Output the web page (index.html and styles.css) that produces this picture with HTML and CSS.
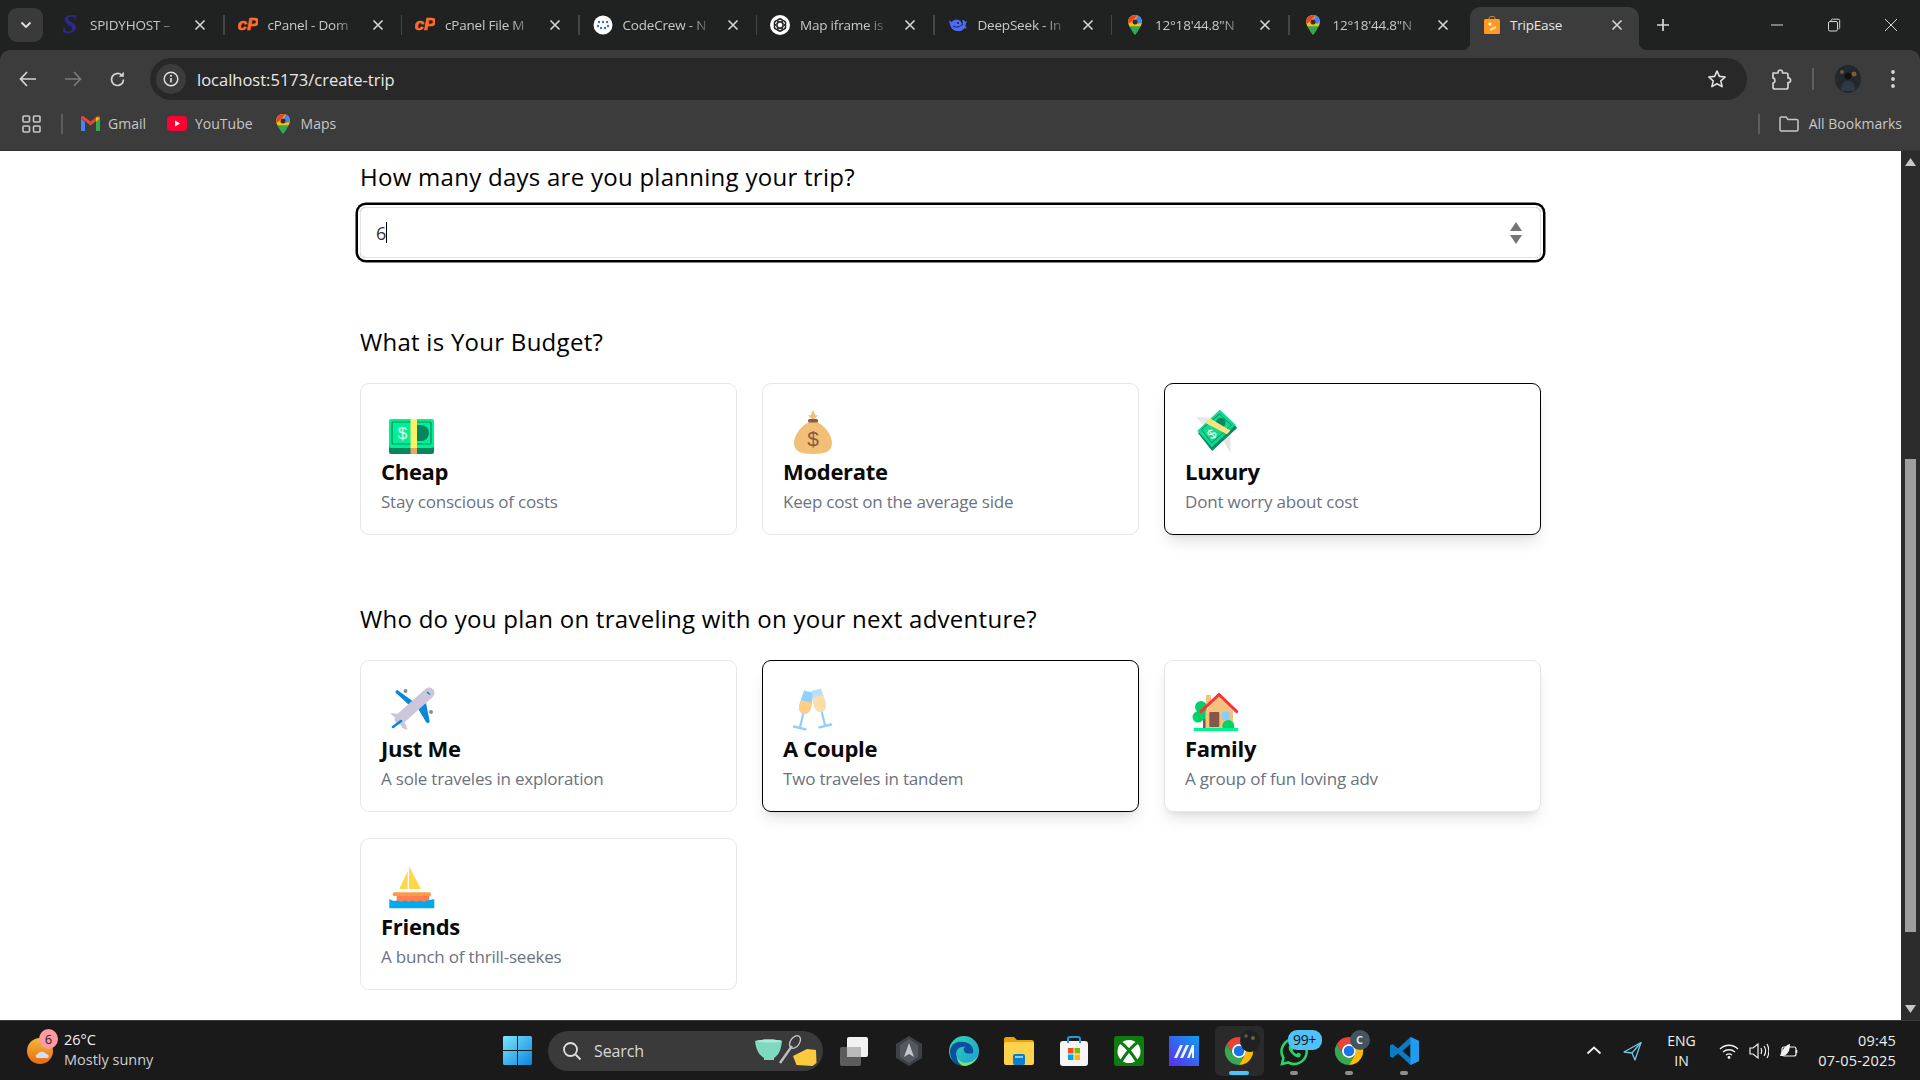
FILE: index.html
```html
<!DOCTYPE html>
<html>
<head>
<meta name="viewport" content="width=device-width, initial-scale=1">
<title>TripEase</title>
<link rel="stylesheet" href="styles.css">
</head>
<body>

<!-- shared icons -->
<svg class="defs" width="0" height="0">
  <defs>
    <symbol id="chrome" viewBox="0 0 32 32">
      <path fill="#ea4335" d="M16 1a15 15 0 0 1 13 7.5H16a7.5 7.5 0 0 0-6.5 11.25L3 8.5A15 15 0 0 1 16 1z"/>
      <path fill="#34a853" d="M3 8.5l6.5 11.25a7.5 7.5 0 0 0 13 0L16 31A15 15 0 0 1 3 8.5z"/>
      <path fill="#fbbc04" d="M29 8.5H16a7.5 7.5 0 0 1 6.5 11.25L16 31A15 15 0 0 0 29 8.5z"/>
      <circle cx="16" cy="16" r="7.5" fill="#fff"/>
      <circle cx="16" cy="16" r="5.6" fill="#1a73e8"/>
    </symbol>
    <clipPath id="pinclip">
      <path d="M12 0C5.5 0 1 5 1 11c0 7 11 21 11 21s11-14 11-21C23 5 18.5 0 12 0z"/>
    </clipPath>
    <symbol id="pin" viewBox="0 0 24 32">
      <g clip-path="url(#pinclip)">
        <rect width="24" height="32" fill="#34a853"/>
        <rect width="24" height="18" fill="#fbbc04"/>
        <path fill="#ea4335" d="M0 0h17L5 12 0 15z"/>
        <path fill="#4285f4" d="M17 0h7v12l-7 2-5-4z"/>
      </g>
      <circle cx="12" cy="11" r="4" fill="#3c2a1c"/>
    </symbol>
    <symbol id="closex" viewBox="0 0 12 12">
      <path d="M1.5 1.5l9 9M10.5 1.5l-9 9" stroke="#d6d6d6" stroke-width="1.6" fill="none"/>
    </symbol>
    <symbol id="cpanel" viewBox="0 0 22 16">
      <text x="11" y="14" text-anchor="middle" font-family="Liberation Sans" font-weight="700" font-style="italic" font-size="19" fill="#ff6c2c" stroke="#ff6c2c" stroke-width=".7">cP</text>
    </symbol>
  </defs>
</svg>

<div class="tabstrip">
  <div class="tabs-btn">
    <svg width="12" height="8" viewBox="0 0 12 8"><path d="M1.5 1.5L6 6l4.5-4.5" stroke="#e3e3e3" stroke-width="1.8" fill="none"/></svg>
  </div>

  <div class="tab">
    <svg class="favicon" viewBox="0 0 20 20"><text x="10" y="17.500" text-anchor="middle" font-family="Liberation Serif" font-weight="700" font-style="italic" font-size="27" fill="#2d2a8c">S</text></svg>
    <span class="tab-title">SPIDYHOST –</span>
    <svg class="tab-close"><use href="#closex"/></svg>
  </div>
  <div class="tab">
    <svg class="favicon"><use href="#cpanel"/></svg>
    <span class="tab-title">cPanel - Dom</span>
    <svg class="tab-close"><use href="#closex"/></svg>
  </div>
  <div class="tab">
    <svg class="favicon"><use href="#cpanel"/></svg>
    <span class="tab-title">cPanel File M</span>
    <svg class="tab-close"><use href="#closex"/></svg>
  </div>
  <div class="tab">
    <svg class="favicon" viewBox="0 0 20 20">
      <circle cx="10" cy="10" r="9.5" fill="#fff"/>
      <g fill="#3f6ec4"><circle cx="6" cy="7" r="1.2"/><circle cx="10" cy="7" r="1.2"/><circle cx="14" cy="7" r="1.2"/><circle cx="5" cy="11" r="1.2"/><circle cx="15" cy="11" r="1.2"/><circle cx="8" cy="13" r="1.2"/><circle cx="12" cy="13" r="1.2"/></g>
    </svg>
    <span class="tab-title">CodeCrew - N</span>
    <svg class="tab-close"><use href="#closex"/></svg>
  </div>
  <div class="tab">
    <svg class="favicon" viewBox="0 0 20 20">
      <circle cx="10" cy="10" r="10" fill="#fff"/>
      <g fill="none" stroke="#222" stroke-width="1.1"><circle cx="10" cy="10" r="5.8"/><ellipse cx="10" cy="10" rx="6.4" ry="2.8" transform="rotate(30 10 10)"/><ellipse cx="10" cy="10" rx="6.4" ry="2.8" transform="rotate(90 10 10)"/><ellipse cx="10" cy="10" rx="6.4" ry="2.8" transform="rotate(150 10 10)"/></g>
    </svg>
    <span class="tab-title">Map iframe is</span>
    <svg class="tab-close"><use href="#closex"/></svg>
  </div>
  <div class="tab">
    <svg class="favicon" viewBox="0 0 20 20">
      <path fill="#4d6bfe" d="M1 5c1 5 2 10 8 11 4 .6 6-1 7.500-3 1 .6 2 .6 2.500 0-1-.5-1.500-1.500-1.500-3 .3-2 1-3 2-4-1 0-1.500.4-2 1-1-1.500-2-2-3.500-2.200 1 1.500 1 3 .2 5C13.500 12 11 8 7 6.500 4.500 8 3 7 1 5z"/>
      <circle cx="8.500" cy="10" r="5.500" fill="#4d6bfe"/><circle cx="10" cy="8" r="1" fill="#202221"/><path d="M5 11c3 2 7 1 10-2" stroke="#202221" stroke-width="1" fill="none"/>
    </svg>
    <span class="tab-title">DeepSeek - In</span>
    <svg class="tab-close"><use href="#closex"/></svg>
  </div>
  <div class="tab">
    <svg class="favicon"><use href="#pin"/></svg>
    <span class="tab-title">12°18'44.8"N</span>
    <svg class="tab-close"><use href="#closex"/></svg>
  </div>
  <div class="tab no-sep">
    <svg class="favicon"><use href="#pin"/></svg>
    <span class="tab-title">12°18'44.8"N</span>
    <svg class="tab-close"><use href="#closex"/></svg>
  </div>
  <div class="tab active">
    <svg class="favicon" viewBox="0 0 20 20">
      <path d="M7 5V3c0-2 6-2 6 0v2" stroke="#e08a1c" stroke-width="1" fill="none"/>
      <rect x="2" y="4" width="16" height="15" rx="1.500" fill="#ff9a1f"/>
      <circle cx="8" cy="9" r="1.500" fill="#fff"/><path d="M8 15l6-3" stroke="#ffe1a8" stroke-width="2"/>
    </svg>
    <span class="tab-title">TripEase</span>
    <svg class="tab-close"><use href="#closex"/></svg>
  </div>

  <svg class="new-tab" width="14" height="14" viewBox="0 0 14 14"><path d="M7 1v12M1 7h12" stroke="#d6d6d6" stroke-width="1.700"/></svg>

  <div class="win-btns">
    <svg width="14" height="14" viewBox="0 0 14 14"><path d="M1 7h12" stroke="#d6d6d6" stroke-width="1"/></svg>
    <svg width="14" height="14" viewBox="0 0 14 14"><rect x="1.500" y="3.500" width="9" height="9.500" rx="1.500" fill="none" stroke="#d6d6d6"/><path d="M4 3.500V2.500c0-.8.500-1.300 1.300-1.300h6c.9 0 1.400.500 1.400 1.400v7c0 .8-.500 1.200-1.200 1.200" fill="none" stroke="#d6d6d6"/></svg>
    <svg width="14" height="14" viewBox="0 0 14 14"><path d="M1 1l12 12M13 1L1 13" stroke="#d6d6d6" stroke-width="1"/></svg>
  </div>
</div>

<div class="toolbar">
  <div class="nav-btn">
    <svg width="18" height="16" viewBox="0 0 18 16"><path d="M8 1L1.500 8 8 15M2 8h15" stroke="#d4d4d4" stroke-width="1.700" fill="none"/></svg>
  </div>
  <div class="nav-btn">
    <svg width="18" height="16" viewBox="0 0 18 16"><path d="M10 1l6.500 7L10 15M16 8H1" stroke="#7a7a7a" stroke-width="1.700" fill="none"/></svg>
  </div>
  <div class="nav-btn">
    <svg width="17" height="17" viewBox="0 0 17 17"><path d="M14.500 8.500a6 6 0 1 1-1.800-4.300" stroke="#d4d4d4" stroke-width="1.700" fill="none"/><path d="M14.800 0.800v5h-5z" fill="#d4d4d4"/></svg>
  </div>
  <div class="address">
    <div class="site-chip">
      <svg width="16" height="16" viewBox="0 0 16 16"><circle cx="8" cy="8" r="6.800" fill="none" stroke="#e3e3e3" stroke-width="1.400"/><path d="M8 7v4.500" stroke="#e3e3e3" stroke-width="1.600"/><circle cx="8" cy="4.800" r="1" fill="#e3e3e3"/></svg>
    </div>
    <span class="url">localhost:5173/create-trip</span>
    <svg class="star" width="20" height="20" viewBox="0 0 20 20"><path d="M10 2l2.400 5.400 5.800.6-4.400 3.900 1.300 5.700L10 14.700l-5.100 2.900 1.300-5.700L1.800 8l5.800-.6z" fill="none" stroke="#e3e3e3" stroke-width="1.600" stroke-linejoin="round"/></svg>
  </div>
  <svg class="puzzle" width="22" height="24" viewBox="0 0 22 24"><path d="M3 6h5c-.5-4 5-4 4.500 0H16c1 0 2 1 2 2v3c3.500-.5 3.500 5 0 4.500V20c0 1-1 2-2 2H5c-1 0-2-1-2-2v-4c2.500 0 2.500-5 0-5z" fill="none" stroke="#d4d4d4" stroke-width="1.700" stroke-linejoin="round"/></svg>
  <span class="tool-sep"></span>
  <svg class="avatar" width="26" height="28" viewBox="0 0 26 28">
    <ellipse cx="13" cy="14" rx="13" ry="14" fill="#23282c"/>
    <circle cx="7" cy="7" r="2" fill="#6b5a3a"/><circle cx="19" cy="9" r="2.500" fill="#75603c"/>
    <circle cx="13" cy="11" r="3.500" fill="#111"/><path d="M6 26c0-7 3-10 7-10s7 3 7 10z" fill="#2f3a48"/>
  </svg>
  <svg class="dots" width="6" height="20" viewBox="0 0 6 20"><g fill="#d4d4d4"><circle cx="3" cy="3" r="1.900"/><circle cx="3" cy="10" r="1.900"/><circle cx="3" cy="17" r="1.900"/></g></svg>
</div>

<div class="bookmarks">
  <svg class="apps" width="19" height="18" viewBox="0 0 19 18"><g fill="none" stroke="#c7c7c7" stroke-width="1.600"><rect x="1" y="1" width="6.500" height="6" rx="1"/><rect x="11.500" y="1" width="6.500" height="6" rx="1"/><rect x="1" y="11" width="6.500" height="6" rx="1"/><rect x="11.500" y="11" width="6.500" height="6" rx="1"/></g></svg>
  <span class="book-sep"></span>
  <svg class="book-icon" width="19" height="15" viewBox="0 0 19 15">
    <path fill="#4285f4" d="M0 2v12c0 .6.400 1 1 1h3V6z"/>
    <path fill="#34a853" d="M19 2v12c0 .6-.400 1-1 1h-3V6z"/>
    <path fill="#ea4335" d="M0 2c0-2 2-2.500 3-1.500l6.500 5 6.500-5c1-1 3-.5 3 1.500l-9.500 7.500z"/>
    <path fill="#fbbc04" d="M15 1.300L19 2l-4 4z"/>
  </svg>
  <span class="book-label">Gmail</span>
  <svg class="book-icon yt" width="20" height="15" viewBox="0 0 20 15"><rect width="20" height="15" rx="4" fill="#ff0033"/><path d="M8 4.500l5 3-5 3z" fill="#fff"/></svg>
  <span class="book-label">YouTube</span>
  <svg class="book-icon maps"><use href="#pin"/></svg>
  <span class="book-label">Maps</span>
  <span class="book-sep right"></span>
  <svg class="book-icon folder" width="20" height="16" viewBox="0 0 20 16"><path d="M1 2.500c0-.8.600-1.500 1.400-1.500H7l2 2.400h8.600c.8 0 1.400.6 1.400 1.400v8.700c0 .8-.6 1.500-1.400 1.500H2.400c-.8 0-1.400-.7-1.400-1.500z" fill="none" stroke="#c7c7c7" stroke-width="1.500"/></svg>
  <span class="book-label">All Bookmarks</span>
</div>

<div class="viewport">
  <div class="page">
    <h2 class="question">How many days are you planning your trip?</h2>
    <div class="days-input">
      <span class="days-value">6</span><span class="caret"></span>
      <span class="spinner">
        <svg width="12" height="9" viewBox="0 0 12 9"><path d="M6 0l6 9H0z" fill="#757575"/></svg>
        <svg width="12" height="9" viewBox="0 0 12 9"><path d="M6 9L0 0h12z" fill="#757575"/></svg>
      </span>
    </div>

    <h2 class="question budget">What is Your Budget?</h2>
    <div class="options">
      <div class="card">
        <svg class="emoji" width="60" height="50" viewBox="0 0 60 50">
          <rect x="8" y="38" width="45" height="12" rx="2" fill="#04875f"/>
          <rect x="8" y="15" width="45" height="29" rx="2" fill="#00f096"/>
          <rect x="11" y="18" width="39" height="22" rx="1" fill="none" stroke="#04875f" stroke-width="1.200"/>
          <path d="M36 21h4a8 8 0 0 1 0 16h-4z" fill="#04875f"/>
          <text x="21.500" y="35" text-anchor="middle" font-family="Liberation Sans" font-size="17" fill="#eafff5">$</text>
          <rect x="29.500" y="15" width="6.500" height="29" fill="#fff06a"/>
          <rect x="29.500" y="44" width="6.500" height="6" fill="#e8a85c"/>
        </svg>
        <div class="card-title">Cheap</div>
        <div class="card-desc">Stay conscious of costs</div>
      </div>
      <div class="card">
        <svg class="emoji" width="60" height="50" viewBox="0 0 60 50">
          <path d="M30 16c-2-2-4-3-5-5l2.500.5L30 6l2.500 5.500L35 11c-1 2-3 3-5 5z" fill="#f2bf77"/>
          <path d="M26 18c-8 4-15 13-15 21 0 8 6 11 19 11s19-3 19-11c0-8-7-17-15-21z" fill="#f2bf77"/>
          <rect x="25" y="15" width="10" height="3.500" rx="1.500" fill="#8a5a44"/>
          <text x="30" y="42" text-anchor="middle" font-family="Liberation Sans" font-size="21" fill="#8a5a44">$</text>
        </svg>
        <div class="card-title">Moderate</div>
        <div class="card-desc">Keep cost on the average side</div>
      </div>
      <div class="card selected">
        <svg class="emoji" width="60" height="52" viewBox="0 0 60 52">
          <path d="M10 13.700h15l-6 9z" fill="#e8e8e8"/>
          <path d="M37 35l9-5 0 21z" fill="#e4e4e4"/>
          <path d="M12 30l15 19 26-24-2-3z" fill="#078a64"/>
          <path d="M35 6l16.500 15.500L26.700 45 11.700 27.700z" fill="#0fd88f"/>
          <path d="M16 26.500l18.500-16 12.500 11.500-20.500 18.500z" fill="none" stroke="#078a64" stroke-width="1"/>
          <circle cx="36" cy="19.500" r="5" fill="#078a64"/>
          <text x="26.500" y="36" text-anchor="middle" font-family="Liberation Sans" font-size="14" fill="#eafff5" transform="rotate(-42 26.500 31)">$</text>
          <path d="M24.500 14.800l21.500 12.700-3.500 4L20.500 20z" fill="#ffe27a"/>
        </svg>
        <div class="card-title">Luxury</div>
        <div class="card-desc">Dont worry about cost</div>
      </div>
    </div>

    <h2 class="question travelers">Who do you plan on traveling with on your next adventure?</h2>
    <div class="options">
      <div class="card">
        <svg class="emoji" width="60" height="50" viewBox="0 0 60 50">
          <path d="M33 21L17 9.500c-2-1-3.500 1-2 2.500l13 12z" fill="#0b86d8"/>
          <path d="M36 26l9 15c1.500 2 4 1 3.500-1.500L45 22z" fill="#0b86d8"/>
          <circle cx="24.500" cy="10" r="2" fill="#8d8d8d"/><circle cx="50" cy="31" r="2" fill="#8d8d8d"/>
          <path d="M9 32l9 1 7 11 1.500 5-5-2-5-8z" fill="#cdc5d8"/>
          <path d="M19 38L48 12" stroke="#cdc5d8" stroke-width="11" stroke-linecap="round"/>
          <path d="M12 46l8-6" stroke="#0b86d8" stroke-width="2.600" stroke-linecap="round"/>
          <path d="M46 11l3 2.500" stroke="#0b86d8" stroke-width="1.600"/>
        </svg>
        <div class="card-title">Just Me</div>
        <div class="card-desc">A sole traveles in exploration</div>
      </div>
      <div class="card selected">
        <svg class="emoji" width="60" height="50" viewBox="0 0 60 50">
          <g transform="rotate(14 21 30)">
            <path d="M16 10h10l1 15c0 5-2.500 8-6 8s-6-3-6-8z" fill="#8fd0ff"/>
            <path d="M15.500 20h11l.5 5c0 5-2.500 8-6 8s-6-3-6-8z" fill="#ffcf85"/>
            <path d="M21 33v14" stroke="#8fd0ff" stroke-width="2.200"/>
            <path d="M15 47.500h12" stroke="#8fd0ff" stroke-width="2.400" stroke-linecap="round"/>
          </g>
          <g transform="rotate(-14 38 28)">
            <path d="M33 8h10l1 15c0 5-2.500 8-6 8s-6-3-6-8z" fill="#b7e0ff"/>
            <path d="M32.500 15h11l.5 8c0 5-2.500 8-6 8s-6-3-6-8z" fill="#ffdca8"/>
            <path d="M38 31v14" stroke="#8fd0ff" stroke-width="2.200"/>
            <path d="M32 45.500h12" stroke="#8fd0ff" stroke-width="2.400" stroke-linecap="round"/>
          </g>
        </svg>
        <div class="card-title">A Couple</div>
        <div class="card-desc">Two traveles in tandem</div>
      </div>
      <div class="card hovered">
        <svg class="emoji" width="60" height="50" viewBox="0 0 60 50">
          <circle cx="16" cy="26" r="6" fill="#00d26a"/><circle cx="13" cy="36" r="5.500" fill="#00d26a"/><circle cx="20" cy="34" r="6" fill="#00d26a"/>
          <rect x="18" y="38" width="3" height="9" fill="#85574a"/>
          <rect x="21" y="14" width="5" height="10" fill="#f4c27c"/>
          <path d="M20.500 30L34 15l14 15v17H20.500z" fill="#f4c27c"/>
          <path d="M16 30.700L34 13.500l17.700 17.200" fill="none" stroke="#ff3030" stroke-width="3" stroke-linecap="round"/>
          <rect x="24.300" y="31" width="10" height="15" rx="1" fill="#85574a"/>
          <rect x="37" y="31" width="8" height="8" fill="#8fcbff"/>
          <circle cx="43.300" cy="45" r="6" fill="#00d26a"/>
          <rect x="8.700" y="47" width="44.600" height="3" fill="#00f58d"/>
        </svg>
        <div class="card-title">Family</div>
        <div class="card-desc">A group of fun loving adv</div>
      </div>
      <div class="card">
        <svg class="emoji" width="60" height="50" viewBox="0 0 60 50">
          <path d="M28 7l12 23H28z" fill="#ffd74a"/>
          <path d="M26.700 11.700V30H18.300z" fill="#ffd74a"/>
          <rect x="11.700" y="33.300" width="38.300" height="3.700" rx="1.500" fill="#ff9a4a"/>
          <path d="M15.700 37h32.600v6H15.700z" fill="#ff7f50"/>
          <path d="M8.300 40c3 2 5 2 8 1.500 3 1.500 5 1.500 7.500 0 3 1.500 5 1.500 7.500 0 3 1.500 5 1.500 7.500 0 3 1.500 5 1.500 7.500 0l7-1.500v9.300h-45z" fill="#00aaee"/>
        </svg>
        <div class="card-title">Friends</div>
        <div class="card-desc">A bunch of thrill-seekes</div>
      </div>
    </div>
  </div>

  <div class="scrollbar">
    <svg class="scroll-arrow" width="11" height="8" viewBox="0 0 11 8"><path d="M5.500 0L11 8H0z" fill="#c8c8c8"/></svg>
    <div class="scroll-thumb"></div>
    <svg class="scroll-arrow" width="11" height="8" viewBox="0 0 11 8"><path d="M5.500 8L0 0h11z" fill="#c8c8c8"/></svg>
  </div>
</div>

<div class="taskbar">
  <div class="weather">
    <svg class="weather-icon" width="30" height="28" viewBox="0 0 30 28">
      <defs><linearGradient id="sun" x1="0" y1="0" x2="0" y2="1"><stop offset="0" stop-color="#f5b83a"/><stop offset="1" stop-color="#ea6a12"/></linearGradient></defs>
      <circle cx="13" cy="14" r="13" fill="url(#sun)"/>
      <path d="M11 21c-3 0-3-4 0-4 1-3 7-3 8 0 3-.5 4 4 1 4z" fill="#cfe0f5"/>
    </svg>
    <span class="weather-badge">6</span>
    <div class="weather-text">
      <div>26°C</div>
      <div class="weather-sub">Mostly sunny</div>
    </div>
  </div>

  <svg class="start" width="29" height="29" viewBox="0 0 29 29">
    <defs><linearGradient id="win" x1="0" y1="0" x2="1" y2="1"><stop offset="0" stop-color="#7ae8fb"/><stop offset="1" stop-color="#0a84e0"/></linearGradient></defs>
    <path fill="url(#win)" d="M0 1.500C0 .6.600 0 1.500 0H14v14H0zM15 0h12.500c.9 0 1.500.6 1.500 1.500V14H15zM0 15h14v14H1.500C.6 29 0 28.400 0 27.500zM15 15h14v12.500c0 .9-.6 1.500-1.500 1.500H15z"/>
  </svg>

  <div class="search">
    <svg width="20" height="20" viewBox="0 0 20 20"><circle cx="8.500" cy="8.500" r="6.500" fill="none" stroke="#e0e0e0" stroke-width="1.800"/><path d="M13.500 13.500l5 5" stroke="#e0e0e0" stroke-width="1.800"/></svg>
    <span class="search-label">Search</span>
    <svg class="search-art" width="62" height="32" viewBox="0 0 62 32">
      <path d="M0 6c6-2 22-2 27 0-1 9-3 14-8 17v2H9v-2C4 20 1 15 0 6z" fill="#7fd9bf"/>
      <path d="M0 6c6-2 22-2 27 0-6 2-20 2-27 0z" fill="#a8ecd8"/>
      <path d="M25 28L37 11" stroke="#bcbcc4" stroke-width="2.400"/>
      <ellipse cx="40" cy="7" rx="4.500" ry="7" transform="rotate(35 40 7)" fill="none" stroke="#c8c8d0" stroke-width="1.300"/>
      <path d="M38 21l14-7 9 1 .5 13-4 3-16-1z" fill="#fbc93e"/>
    </svg>
  </div>

  <div class="task-icons">
    <div class="task-icon">
      <svg width="30" height="30" viewBox="0 0 30 30"><rect x="1" y="11" width="21" height="19" rx="2" fill="#5c5c5c"/><rect x="8" y="1" width="21" height="20" rx="2" fill="#f2f2f2"/><rect x="8" y="11" width="14" height="10" fill="#b9b9b9"/></svg>
    </div>
    <div class="task-icon">
      <svg width="28" height="30" viewBox="0 0 28 30"><path d="M14 0l13 8v14l-13 8-13-8V8z" fill="#3d4147"/><path d="M14 3l9 6v12l-9 6-9-6V9z" fill="#55595f"/><path d="M14 7l5 14-5-3-5 3z" fill="#c4c8ce"/></svg>
    </div>
    <div class="task-icon">
      <svg width="30" height="30" viewBox="0 0 30 30">
        <defs><linearGradient id="edge" x1="0" y1="0" x2="1" y2="1"><stop offset="0" stop-color="#33d7b0"/><stop offset="1" stop-color="#1a9bd6"/></linearGradient></defs>
        <circle cx="15" cy="15" r="15" fill="url(#edge)"/>
        <path d="M1 15C2 7 9 5 15 6c7 1 10 6 9 11-3 1-8 1-9-2-1-2 0-3 1-4-6-1-11 4-8 11 1 3 4 6 7 8C7 30 1 24 1 15z" fill="#0c4f9e"/>
        <path d="M30 17c-2 7-7 12-14 13-4 0-8-4-8-9 2 5 8 7 13 5 4-1 7-4 9-9z" fill="#7fe06a"/>
      </svg>
    </div>
    <div class="task-icon">
      <svg width="30" height="28" viewBox="0 0 30 28"><path d="M0 2c0-1 1-2 2-2h8l3 3h15c1 0 2 1 2 2v2H0z" fill="#e8a20c"/><rect y="5" width="30" height="23" rx="2" fill="#ffd24d"/><rect x="9" y="17" width="12" height="11" rx="2" fill="#0a7fcf"/><rect x="11" y="19" width="8" height="2" fill="#7fd0ff"/></svg>
    </div>
    <div class="task-icon">
      <svg width="28" height="30" viewBox="0 0 28 30"><rect x="0" y="5" width="28" height="25" rx="3" fill="#f5f5f5"/><path d="M8 7V3c0-1 1-2 2-2h8c1 0 2 1 2 2v4" fill="none" stroke="#1e9be8" stroke-width="2"/><rect x="8" y="12" width="5.500" height="5.500" fill="#f25022"/><rect x="14.500" y="12" width="5.500" height="5.500" fill="#7fba00"/><rect x="8" y="18.500" width="5.500" height="5.500" fill="#00a4ef"/><rect x="14.500" y="18.500" width="5.500" height="5.500" fill="#ffb900"/></svg>
    </div>
    <div class="task-icon">
      <svg width="30" height="30" viewBox="0 0 30 30"><rect width="30" height="30" rx="3" fill="#107c10"/><circle cx="15" cy="15.500" r="11.500" fill="#fff"/><path d="M6.500 6.500c5 3 12 12 16.500 19M23.500 6.500c-5 3-12 12-16.500 19" fill="none" stroke="#107c10" stroke-width="3.200"/></svg>
    </div>
    <div class="task-icon">
      <svg width="30" height="30" viewBox="0 0 30 30">
        <defs><linearGradient id="mblue" x1="0" y1="1" x2="1" y2="0"><stop offset="0" stop-color="#5a2cf0"/><stop offset="1" stop-color="#0ea0f0"/></linearGradient></defs>
        <rect width="30" height="30" fill="url(#mblue)"/>
        <path d="M5 22l6-13h3l-6 13zM11 22l6-13h3l-6 13zM18 22l5-13h2v13h-2v-6l-2.500 6z" fill="#f2f2ff"/>
      </svg>
    </div>
    <div class="task-icon running active">
      <svg width="30" height="30"><use href="#chrome"/></svg>
      <svg class="task-avatar" width="20" height="22" viewBox="0 0 20 22"><ellipse cx="10" cy="11" rx="10" ry="11" fill="#1f2224"/><circle cx="6" cy="6" r="1.800" fill="#6b5a3a"/><circle cx="13" cy="8" r="2" fill="#75603c"/></svg>
      <span class="task-dot"></span>
    </div>
    <div class="task-icon running">
      <svg width="30" height="30" viewBox="0 0 30 30"><path d="M15 3a12.500 12.500 0 0 0-10.600 19L3 28l6.200-1.500A12.500 12.500 0 1 0 15 3z" fill="none" stroke="#25d366" stroke-width="2.600"/><path d="M10 10c-1 2 0 5 3 8s6 4 8 3l1-3-3-1.500-1.500 1.500c-2-1-3-2-4-4l1.500-1.500L13 9z" fill="#25d366"/></svg>
      <span class="task-badge">99+</span>
      <span class="task-dot"></span>
    </div>
    <div class="task-icon running">
      <svg width="30" height="30"><use href="#chrome"/></svg>
      <span class="task-letter">C</span>
      <span class="task-dot"></span>
    </div>
    <div class="task-icon running">
      <svg width="30" height="30" viewBox="0 0 30 30"><path d="M21.500 1L30 5v20l-8.500 4L9 17.500 3.500 22 1 20.500v-11L3.500 8 9 12.500z" fill="#0a7cc4"/><path d="M21.500 8l-8 7 8 7z" fill="#1a1a1a"/><path d="M21.500 1L30 5v20l-8.500 4z" fill="#1f9cf0"/></svg>
      <span class="task-dot"></span>
    </div>
  </div>

  <div class="tray">
    <svg class="tray-chevron" width="16" height="9" viewBox="0 0 16 9"><path d="M1.500 7.500L8 1.500l6.500 6" stroke="#f0f0f0" stroke-width="1.800" fill="none"/></svg>
    <svg class="tray-send" width="20" height="20" viewBox="0 0 20 20"><path d="M18 1.500L1 11l8 1 3 7z" fill="none" stroke="#6fc8e8" stroke-width="1.300" stroke-linejoin="round"/><path d="M18 1.500L9 12" stroke="#6fc8e8" stroke-width="1.300"/></svg>
    <div class="tray-lang"><div>ENG</div><div>IN</div></div>
    <svg class="tray-wifi" width="20" height="16" viewBox="0 0 20 16"><g fill="none" stroke="#f0f0f0" stroke-width="1.300"><path d="M1 6c5-5 13-5 18 0"/><path d="M4 9c3.500-3 8.500-3 12 0"/><path d="M7 12c2-1.500 4-1.500 6 0"/></g><circle cx="10" cy="14.500" r="1.400" fill="#f0f0f0"/></svg>
    <svg class="tray-vol" width="20" height="16" viewBox="0 0 20 16"><path d="M1 5h3l5-4v14l-5-4H1z" fill="none" stroke="#f0f0f0" stroke-width="1.200"/><g fill="none" stroke="#f0f0f0" stroke-width="1.200"><path d="M12 5c1 2 1 4 0 6"/><path d="M15 3c2 3 2 7 0 10"/><path d="M18 1c2.500 4 2.500 10 0 14"/></g></svg>
    <svg class="tray-bat" width="20" height="16" viewBox="0 0 20 16"><rect x="3" y="4" width="14" height="9" rx="2" fill="none" stroke="#f0f0f0" stroke-width="1.200"/><path d="M17.500 7v3" stroke="#f0f0f0" stroke-width="1.600"/><path d="M1 13C3 6 7 2 11 1c0 6-2 11-7 12z" fill="#f0f0f0"/></svg>
    <div class="clock"><div>09:45</div><div>07-05-2025</div></div>
  </div>
</div>

</body>
</html>
```

FILE: styles.css
```css
* {
  box-sizing: border-box;
}

html, body {
  margin: 0;
  height: 100%;
  overflow: hidden;
}

body {
  display: flex;
  flex-direction: column;
  height: 1080px;
  font-family: "Open Sans", "Noto Sans", sans-serif;
  background: #202221;
}

.defs {
  position: absolute;
}

/* tab strip */
.tabstrip {
  display: flex;
  height: 50px;
  flex: none;
  background: #202221;
  color: #d6d6d6;
}

.tabs-btn {
  width: 35px;
  height: 34px;
  margin: 8px 4px 0 8px;
  border-radius: 9px;
  background: #3a3a3a;
  display: flex;
  align-items: center;
  justify-content: center;
}

.tab {
  position: relative;
  width: 177.5px;
  height: 43px;
  margin-top: 7px;
  padding: 0 0 0 13px;
  display: flex;
  align-items: center;
  flex: none;
}

.tab::after {
  content: "";
  position: absolute;
  right: 0;
  top: 8px;
  width: 1.5px;
  height: 20px;
  background: #464646;
}

.tab.no-sep::after {
  display: none;
}

.favicon {
  width: 20px;
  height: 20px;
  flex: none;
  margin-top: -7px;
  overflow: visible;
}

.tab-title {
  width: 92px;
  margin: -7px 0 0 10px;
  font-size: 13.5px;
  letter-spacing: -0.2px;
  color: #c8c8c8;
  white-space: nowrap;
  -webkit-mask-image: linear-gradient(to right, #000 72%, rgba(0, 0, 0, .25) 92%);
  mask-image: linear-gradient(to right, #000 72%, rgba(0, 0, 0, .25) 92%);
}

.tab-close {
  width: 12px;
  height: 12px;
  margin: -7px 0 0 12px;
  flex: none;
}

.tab.active {
  width: 169px;
  margin-left: 3px;
  margin-right: 4.5px;
  padding-left: 12px;
  background: #3c3c3c;
  border-radius: 10px 10px 0 0;
}

.tab.active::before {
  content: "";
  position: absolute;
  left: -8px;
  bottom: 0;
  width: 8px;
  height: 8px;
  background: radial-gradient(circle at 0 0, transparent 8px, #3c3c3c 8.5px);
}

.tab.active::after {
  top: auto;
  right: -8px;
  bottom: 0;
  width: 8px;
  height: 8px;
  background: radial-gradient(circle at 100% 0, transparent 8px, #3c3c3c 8.5px);
}

.tab.active .tab-title {
  width: 89px;
  margin-left: 8px;
  color: #e6e6e6;
  -webkit-mask-image: none;
  mask-image: none;
}

.new-tab {
  margin: 18px 0 0 12px;
}

.win-btns {
  display: flex;
  margin-left: 100px;
  margin-top: 18px;
  gap: 43px;
}

/* address row */
.toolbar {
  flex: none;
  height: 56px;
  padding: 8px 0 6px 5px;
  background: #3c3c3c;
  border-radius: 10px 10px 0 0;
  display: flex;
  align-items: center;
}

.nav-btn {
  width: 45px;
  display: flex;
  justify-content: center;
}

.address {
  width: 1597px;
  height: 42px;
  margin-left: 10px;
  padding: 0 20px 0 6px;
  border-radius: 21px;
  background: #282828;
  display: flex;
  align-items: center;
}

.site-chip {
  width: 30px;
  height: 30px;
  border-radius: 50%;
  background: #3c3c3c;
  display: flex;
  align-items: center;
  justify-content: center;
}

.url {
  margin-left: 11px;
  font-size: 16.5px;
  color: #e8e8e8;
}

.star {
  margin-left: auto;
}

.puzzle {
  margin-left: 23px;
}

.tool-sep {
  width: 1.5px;
  height: 22px;
  margin-left: 20px;
  background: #5e5e5e;
}

.avatar {
  margin-left: 21px;
}

.dots {
  margin-left: 29px;
}

/* bookmarks bar */
.bookmarks {
  flex: none;
  height: 45px;
  padding: 0 0 9px 22px;
  background: #3c3c3c;
  border-bottom: 1px solid #333;
  display: flex;
  align-items: center;
}

.book-sep {
  flex: none;
  width: 2px;
  height: 20px;
  margin-left: 20px;
  background: #5e5e5e;
}

.book-sep.right {
  margin-left: auto;
}

.book-icon {
  margin-left: 18px;
  flex: none;
}

.book-icon.yt {
  margin-left: 21px;
}

.book-icon.maps {
  width: 16px;
  height: 20px;
  margin-left: 22px;
  margin-right: 2px;
}

.book-icon.folder {
  margin-left: 19px;
}

.book-label {
  margin-left: 8px;
  font-size: 14px;
  color: #c7c7c7;
}

.book-label:last-child {
  margin-left: 10px;
  margin-right: 18px;
}

/* page */
.viewport {
  flex: none;
  height: 869px;
  display: flex;
  background: #fff;
}

.page {
  flex: 1;
  padding: 10px 0 0 360px;
  overflow: hidden;
}

.question {
  margin: 0;
  font-size: 24px;
  line-height: 32px;
  font-weight: 500;
  letter-spacing: 0.27px;
  color: #000;
}

.days-input {
  width: 1181px;
  height: 51px;
  margin-top: 14px;
  padding: 0 16px 0 15px;
  display: flex;
  align-items: center;
  border: 1px solid #e5e5e5;
  border-radius: 6px;
  box-shadow: 0 0 0 2px #fff, 0 0 0 4.5px #000;
}

.days-value {
  font-size: 18px;
  color: #333;
}

.caret {
  width: 1px;
  height: 21px;
  background: #000;
}

.spinner {
  margin-left: auto;
  display: flex;
  flex-direction: column;
  gap: 4px;
  margin-right: 2px;
}

.spinner svg {
  display: block;
}

.question.budget {
  margin-top: 68px;
}

.question.travelers {
  margin-top: 68px;
}

.options {
  width: 1181px;
  margin-top: 25px;
  display: grid;
  grid-template-columns: repeat(3, 377px);
  grid-auto-rows: 152px;
  column-gap: 25px;
  row-gap: 25.5px;
}

.card {
  padding: 20px;
  border: 1px solid #e5e7eb;
  border-radius: 9px;
  background: #fff;
}

.card.selected {
  border-color: #000;
  box-shadow: 0 10px 15px -3px rgba(0, 0, 0, .1), 0 4px 6px -4px rgba(0, 0, 0, .1);
}

.card.hovered {
  box-shadow: 0 10px 15px -3px rgba(0, 0, 0, .1), 0 4px 6px -4px rgba(0, 0, 0, .1);
}

.emoji {
  display: block;
  height: 50px;
}

.card-title {
  font-size: 22px;
  line-height: 32px;
  font-weight: 700;
  letter-spacing: -0.3px;
  color: #0a0a0a;
  margin-top: 1px;
}

.card-desc {
  font-size: 17px;
  line-height: 26px;
  margin-top: 2px;
  letter-spacing: -0.2px;
  color: #6b7280;
}

/* scrollbar */
.scrollbar {
  flex: none;
  width: 19px;
  background: #2c2c2c;
  display: flex;
  flex-direction: column;
  align-items: center;
  padding: 7px 0;
}

.scroll-thumb {
  width: 11px;
  height: 473px;
  margin-top: 293px;
  margin-bottom: auto;
  background: #9f9f9f;
}

/* taskbar */
.taskbar {
  flex: none;
  height: 60px;
  display: flex;
  align-items: center;
  background: #1a1a1a;
  border-top: 1px solid #3a3a3a;
  color: #f0f0f0;
}

.weather {
  position: relative;
  width: 503px;
  padding-left: 27px;
  display: flex;
  align-items: center;
  flex: none;
}

.weather-icon {
  flex: none;
}

.weather-badge {
  position: absolute;
  left: 39px;
  top: -3px;
  width: 19px;
  height: 20px;
  border-radius: 50%;
  background: #ff9aa2;
  color: #222;
  font-size: 13px;
  line-height: 20px;
  text-align: center;
}

.weather-text {
  margin: -2px 0 0 7px;
  font-size: 14.5px;
  line-height: 20px;
}

.weather-sub {
  color: #cfcfcf;
}

.start {
  flex: none;
}

.search {
  width: 275px;
  height: 40px;
  margin-left: 16px;
  padding: 0 6px 0 14px;
  border-radius: 20px;
  background: #3a3a3a;
  display: flex;
  align-items: center;
  flex: none;
}

.search-label {
  margin-left: 12px;
  font-size: 16px;
  letter-spacing: -0.1px;
  color: #d8d8d8;
}

.search-art {
  margin-left: auto;
}

.task-icons {
  display: flex;
  margin-left: 3.5px;
  flex: none;
}

.task-icon {
  position: relative;
  width: 55px;
  height: 50px;
  display: flex;
  align-items: center;
  justify-content: center;
}

.task-icon.active {
  width: 49px;
  margin: 0 3px;
  border-radius: 6px;
  background: #2a2a2a;
}

.task-dot {
  position: absolute;
  left: 50%;
  bottom: 1px;
  width: 8px;
  height: 4px;
  margin-left: -4px;
  border-radius: 2px;
  background: #8e8e8e;
}

.active .task-dot {
  width: 20px;
  margin-left: -10px;
  background: #4fc3f7;
}

.task-avatar {
  position: absolute;
  right: 4px;
  top: 4px;
}

.task-badge {
  position: absolute;
  left: 21px;
  top: 4px;
  width: 34px;
  height: 20px;
  border-radius: 9px;
  background: #4fc3f7;
  color: #111;
  font-size: 14px;
  line-height: 20px;
  text-align: center;
  letter-spacing: -0.4px;
}

.task-letter {
  position: absolute;
  left: 28px;
  top: 4px;
  width: 20px;
  height: 20px;
  border-radius: 50%;
  background: #44555f;
  color: #dfe6ea;
  font-size: 11px;
  font-weight: 700;
  line-height: 20px;
  text-align: center;
}

.tray {
  flex: 1;
  display: flex;
  align-items: center;
}

.tray-chevron {
  margin-left: 154px;
}

.tray-send {
  margin-left: 21px;
}

.tray-lang {
  width: 40px;
  margin-left: 19px;
  font-size: 14px;
  line-height: 20px;
  text-align: center;
}

.tray-wifi {
  margin-left: 17px;
}

.tray-vol {
  margin-left: 10px;
}

.tray-bat {
  margin-left: 10px;
}

.clock {
  margin-left: auto;
  padding-right: 24px;
  font-size: 14.5px;
  line-height: 20px;
  letter-spacing: 0.2px;
  text-align: right;
}
```
